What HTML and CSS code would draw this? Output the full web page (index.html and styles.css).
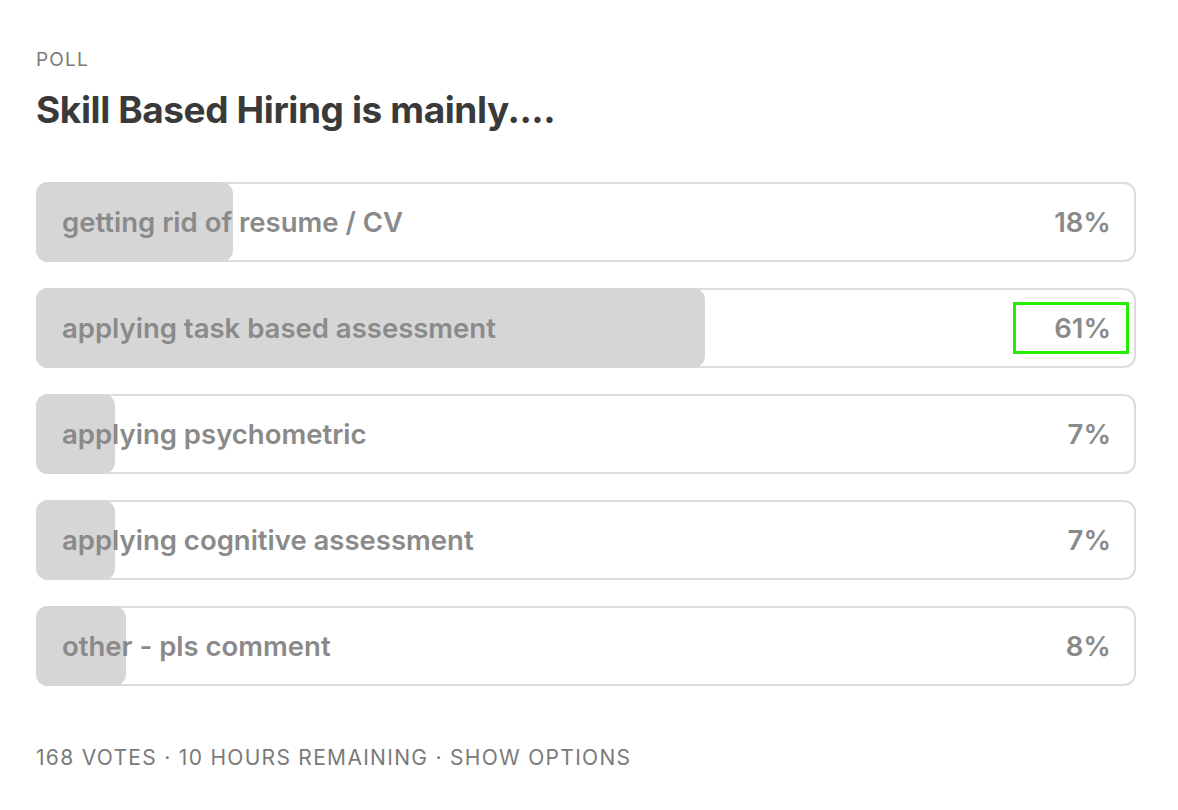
FILE: index.html
```html
<!DOCTYPE html>
<html>
<head>
<meta charset="utf-8">
<link rel="stylesheet" href="styles.css">
</head>
<body>
<div class="poll">
  <div class="kicker">POLL</div>
  <h1 class="title">Skill Based Hiring is mainly....</h1>
  <div class="options">
    <div class="option"><div class="fill" style="width:18%"></div><span class="label">getting rid of resume / CV</span><span class="pct">18%</span></div>
    <div class="option"><div class="fill" style="width:61%"></div><span class="label">applying task based assessment</span><span class="pct marked">61%</span></div>
    <div class="option"><div class="fill" style="width:7.2%"></div><span class="label">applying psychometric</span><span class="pct">7%</span></div>
    <div class="option"><div class="fill" style="width:7.2%"></div><span class="label">applying cognitive assessment</span><span class="pct">7%</span></div>
    <div class="option"><div class="fill" style="width:8.2%"></div><span class="label">other - pls comment</span><span class="pct">8%</span></div>
  </div>
  <div class="meta">168 VOTES · 10 HOURS REMAINING · SHOW OPTIONS</div>
</div>
</body>
</html>
```
FILE: styles.css
```css
html, body {
  margin: 0;
  padding: 0;
  background: #ffffff;
}
body {
  font-family: Inter, "Noto Sans", "Liberation Sans", sans-serif;
}
.poll {
  width: 1100px;
  padding: 48px 0 0 36px;
}
.kicker {
  font-size: 19px;
  letter-spacing: 1.2px;
  color: #7a7a7a;
  line-height: 24px;
}
.title {
  margin: 16px 0 0 0;
  font-size: 37px;
  font-weight: 700;
  letter-spacing: -0.4px;
  color: #3a3a3a;
  line-height: 44px;
}
.options {
  margin-top: 50px;
  display: flex;
  flex-direction: column;
  gap: 26px;
}
.option {
  position: relative;
  height: 76px;
  border: 2px solid #dcdcdc;
  border-radius: 12px;
  display: flex;
  align-items: center;
  justify-content: space-between;
  padding: 0 23px 0 24px;
}
.fill {
  position: absolute;
  left: -2px;
  top: -2px;
  bottom: -2px;
  background: #d6d6d6;
  border-radius: 12px;
}
.label, .pct {
  position: relative;
  font-size: 27.5px;
  font-weight: 600;
  color: #8a8a8a;
  letter-spacing: 0;
}
.pct.marked {
  box-sizing: border-box;
  width: 110px;
  height: 46px;
  display: flex;
  align-items: center;
  justify-content: flex-end;
  padding-right: 15px;
  margin-right: -15px;
  outline: 3px solid #22ee00;
}
.meta {
  margin-top: 59px;
  font-size: 21px;
  letter-spacing: 1.3px;
  color: #7a7a7a;
}
```
